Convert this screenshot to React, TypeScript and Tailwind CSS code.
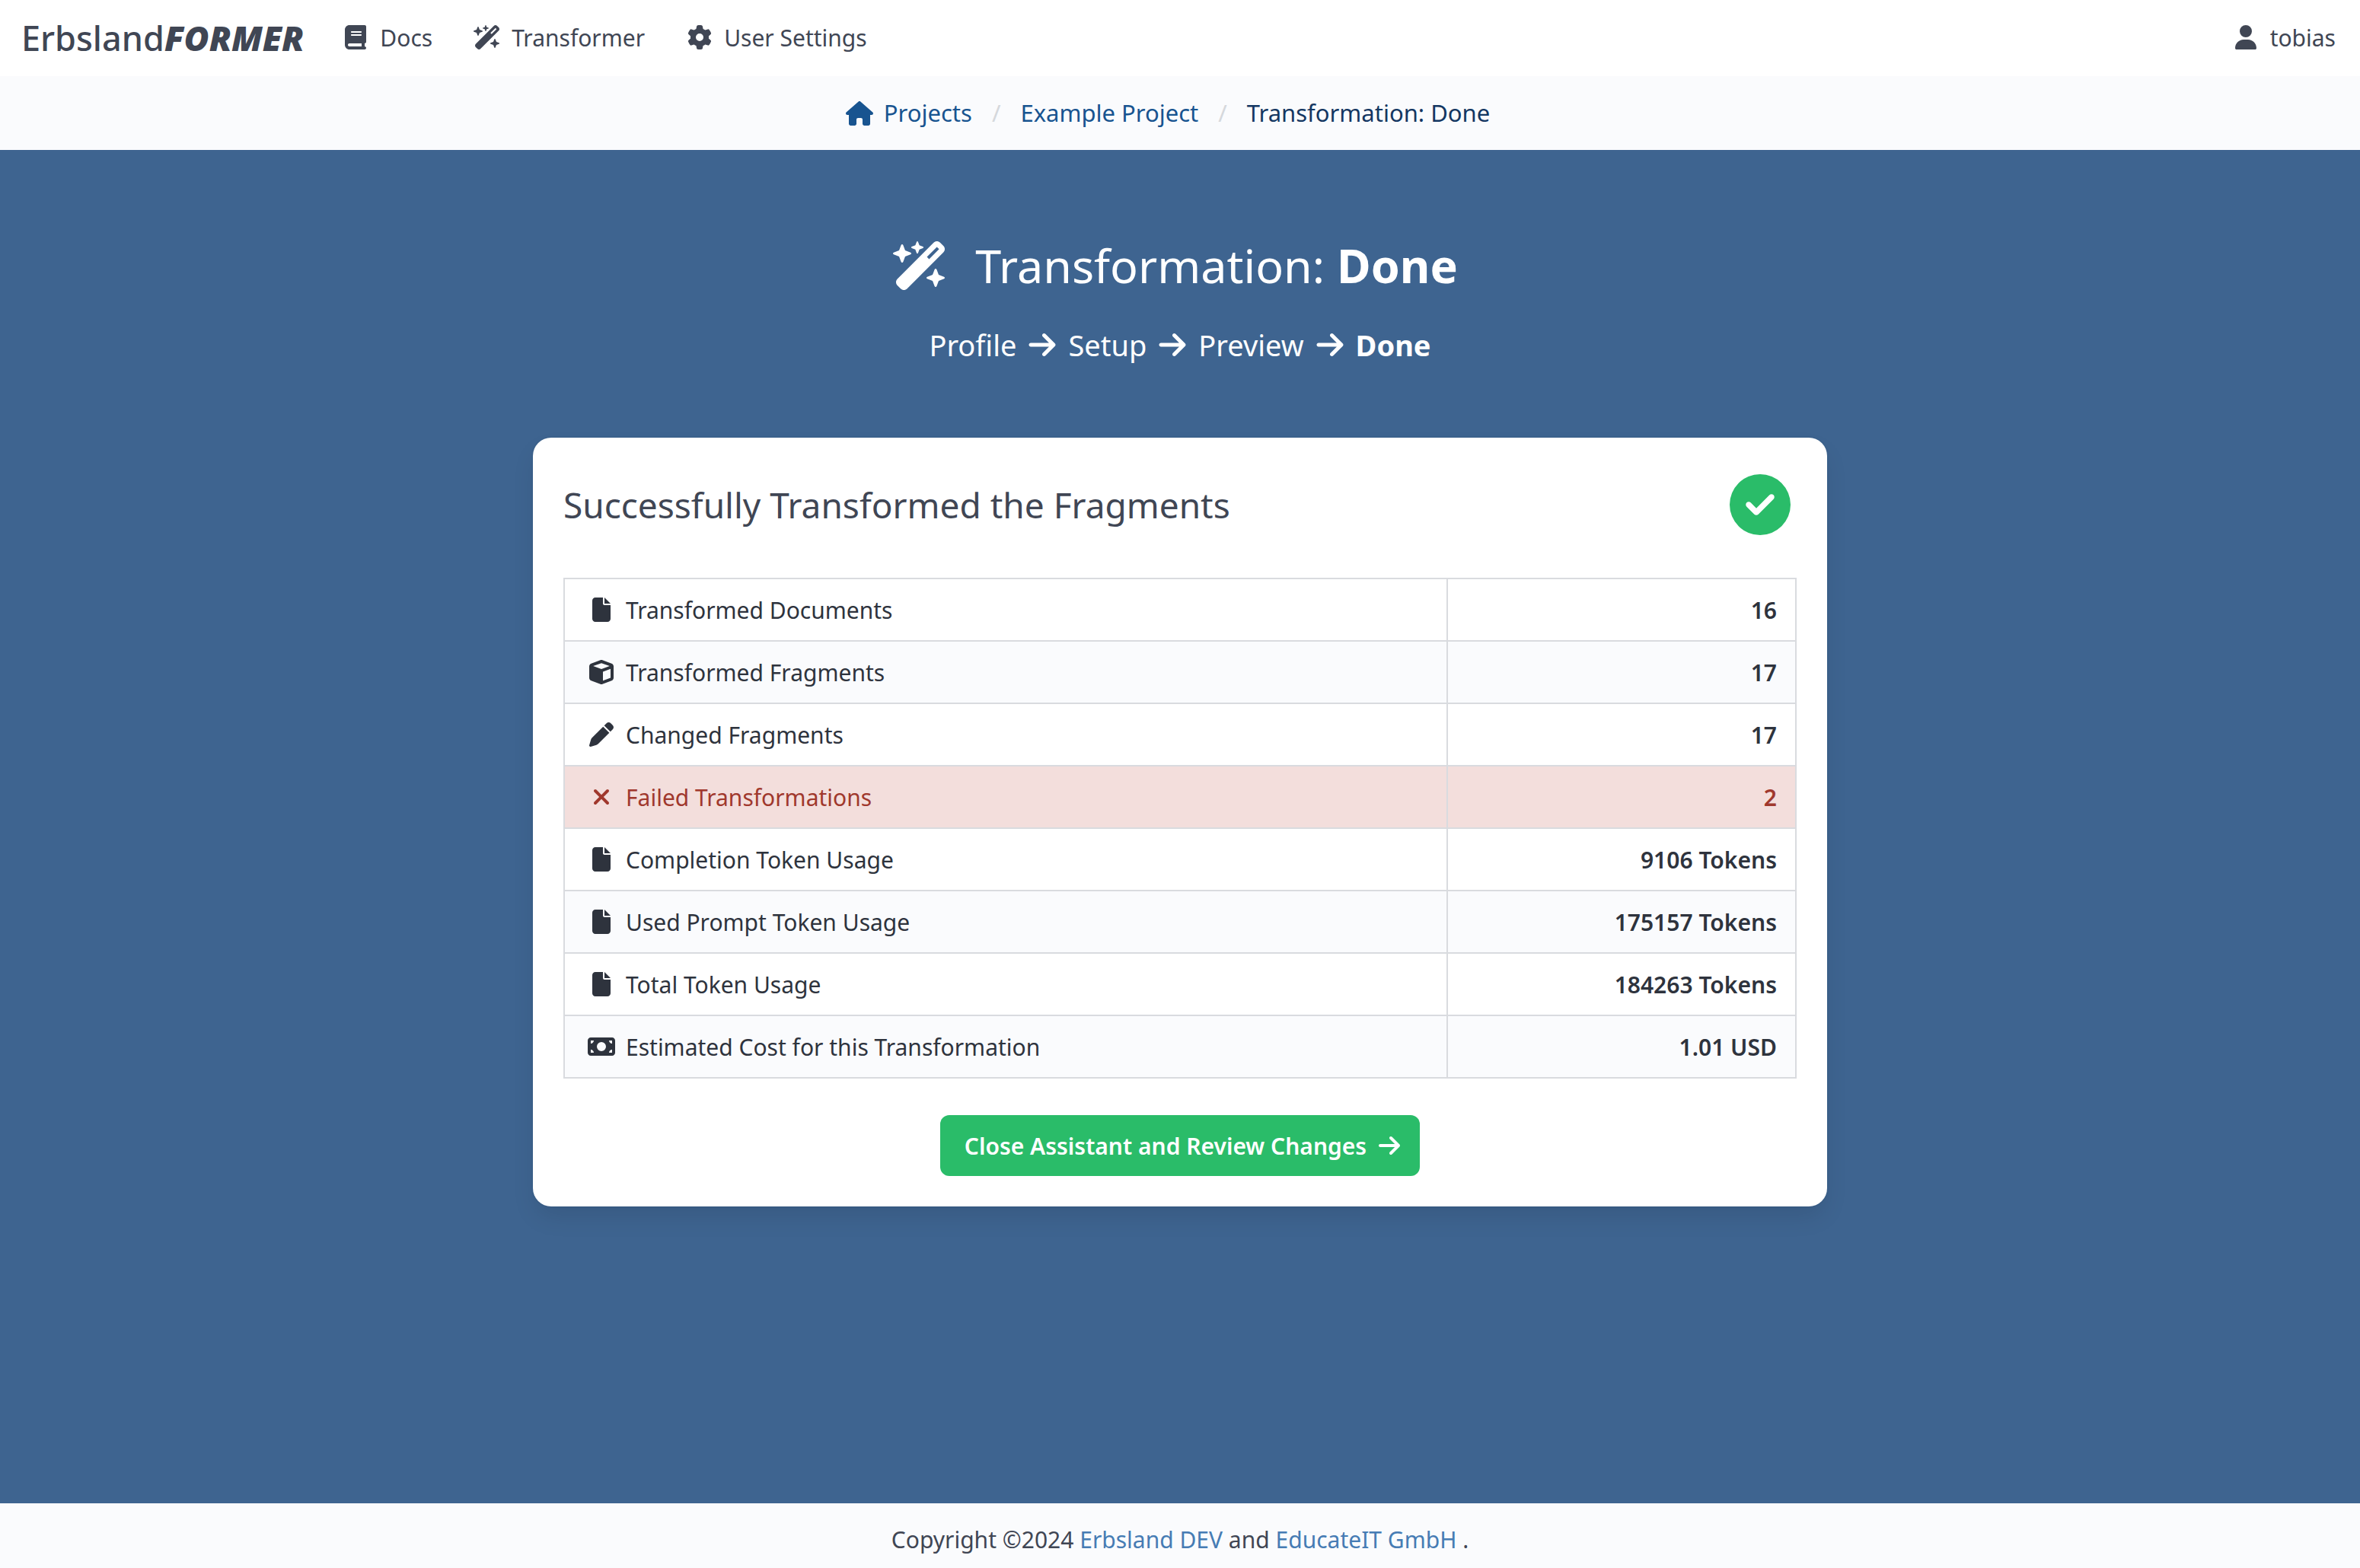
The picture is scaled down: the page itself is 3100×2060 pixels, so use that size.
import React from "react";
import type { IconType } from "react-icons";
import {
  FaArrowRight,
  FaBook,
  FaCircleCheck,
  FaCube,
  FaFile,
  FaGear,
  FaHouse,
  FaMoneyBill,
  FaPen,
  FaUser,
  FaWandMagicSparkles,
  FaXmark,
} from "react-icons/fa6";

type Row = { icon: IconType; label: string; value: string; failed?: boolean };

const rows: Row[] = [
  { icon: FaFile, label: "Transformed Documents", value: "16" },
  { icon: FaCube, label: "Transformed Fragments", value: "17" },
  { icon: FaPen, label: "Changed Fragments", value: "17" },
  { icon: FaXmark, label: "Failed Transformations", value: "2", failed: true },
  { icon: FaFile, label: "Completion Token Usage", value: "9106 Tokens" },
  { icon: FaFile, label: "Used Prompt Token Usage", value: "175157 Tokens" },
  { icon: FaFile, label: "Total Token Usage", value: "184263 Tokens" },
  { icon: FaMoneyBill, label: "Estimated Cost for this Transformation", value: "1.01 USD" },
];

function IconBox({ icon: Icon }: { icon: IconType }) {
  return (
    <span className="flex w-12 shrink-0 justify-center" aria-hidden="true">
      <Icon className="h-8 w-9" />
    </span>
  );
}

function NavItem({ icon, label }: { icon: IconType; label: string }) {
  return (
    <a href="#" className="flex items-center gap-2 px-6">
      <IconBox icon={icon} />
      <span>{label}</span>
    </a>
  );
}

function Navbar() {
  return (
    <nav className="flex h-[100px] items-stretch bg-white pr-2 pb-0.5 text-[#404654]" aria-label="Main">
      <a href="#" className="flex items-center pr-5 pl-7 text-[45px] font-medium">
        <span>Erbsland</span>
        <span className="font-black italic">FORMER</span>
      </a>
      <NavItem icon={FaBook} label="Docs" />
      <NavItem icon={FaWandMagicSparkles} label="Transformer" />
      <NavItem icon={FaGear} label="User Settings" />
      <div className="ml-auto flex">
        <NavItem icon={FaUser} label="tobias" />
      </div>
    </nav>
  );
}

function Breadcrumb() {
  return (
    <nav className="bg-[#fafbfd] py-6 text-[31px] text-[#185490]" aria-label="Breadcrumb">
      <ol className="flex h-[49px] items-center justify-center pr-3">
        <li>
          <a href="#" className="flex items-center gap-2 pr-[26px]">
            <IconBox icon={FaHouse} />
            Projects
          </a>
        </li>
        <li className="flex">
          <span className="text-[#d5d8dc]" aria-hidden="true">/</span>
          <a href="#" className="px-[26px]">Example Project</a>
        </li>
        <li className="flex">
          <span className="text-[#d5d8dc]" aria-hidden="true">/</span>
          <a href="#" aria-current="page" className="px-[26px] text-[#143762]">
            Transformation: Done
          </a>
        </li>
      </ol>
    </nav>
  );
}

function Steps() {
  return (
    <p className="mt-[34px] flex items-center justify-center gap-3.5 text-[38px] leading-[60px]">
      {["Profile", "Setup", "Preview"].map((step) => (
        <React.Fragment key={step}>
          <span>{step}</span>
          <FaArrowRight className="h-10 w-10" aria-hidden="true" />
        </React.Fragment>
      ))}
      <strong className="font-bold">Done</strong>
    </p>
  );
}

function ResultCard() {
  return (
    <section className="mt-[92px] w-full max-w-[1700px] rounded-3xl bg-white p-10 text-[#2e333d] shadow-[0_16px_32px_-4px_rgba(10,10,10,0.1),0_0_0_2px_rgba(10,10,10,0.02)]">
      <div className="flex items-center justify-between pt-2 pr-2">
        <h2 className="text-[46px] text-[#404654]">Successfully Transformed the Fragments</h2>
        <FaCircleCheck className="h-20 w-20 text-[#2abc69]" aria-label="Success" />
      </div>
      <table className="mt-14 w-full border-collapse">
        <tbody>
          {rows.map(({ icon, label, value, failed }) => (
            <tr
              key={label}
              className={failed ? "bg-[#f3dedc] text-[#a0382d]" : "even:bg-[#fafbfd]"}
            >
              <th scope="row" className="h-[82px] border-2 border-[#d9dbdf] px-6 text-left font-normal">
                <span className="flex items-center gap-2">
                  <IconBox icon={icon} />
                  {label}
                </span>
              </th>
              <td className="w-[458px] border-2 border-[#d9dbdf] px-6 text-right font-semibold">{value}</td>
            </tr>
          ))}
        </tbody>
      </table>
      <div className="mt-12 flex justify-center">
        <button
          type="button"
          className="flex h-20 items-center gap-3.5 rounded-xl bg-[#2abc69] pr-6 pl-8 font-semibold text-white"
        >
          Close Assistant and Review Changes
          <FaArrowRight className="h-8 w-8" aria-hidden="true" />
        </button>
      </div>
    </section>
  );
}

export default function App() {
  return (
    <div className="flex min-h-screen flex-col font-['Noto_Sans',sans-serif] text-[30px] leading-[45px]">
      <header>
        <Navbar />
        <Breadcrumb />
      </header>
      <main className="flex flex-1 flex-col items-center bg-[#3e6490] px-12 pt-[112px] pb-24">
        <h1 className="flex items-center gap-9 pr-3 text-[61px] leading-[80px] text-white">
          <FaWandMagicSparkles className="h-16 w-[72px]" aria-hidden="true" />
          <span>
            Transformation: <strong className="font-bold">Done</strong>
          </span>
        </h1>
        <div className="text-white">
          <Steps />
        </div>
        <ResultCard />
      </main>
      <footer className="bg-[#fafbfd] pt-[25px] pb-[15px] text-center text-[#404654]">
        Copyright ©2024{" "}
        <a href="#" className="text-[#467cb4]">Erbsland DEV</a> and{" "}
        <a href="#" className="text-[#467cb4]">EducateIT GmbH</a> .
      </footer>
    </div>
  );
}
